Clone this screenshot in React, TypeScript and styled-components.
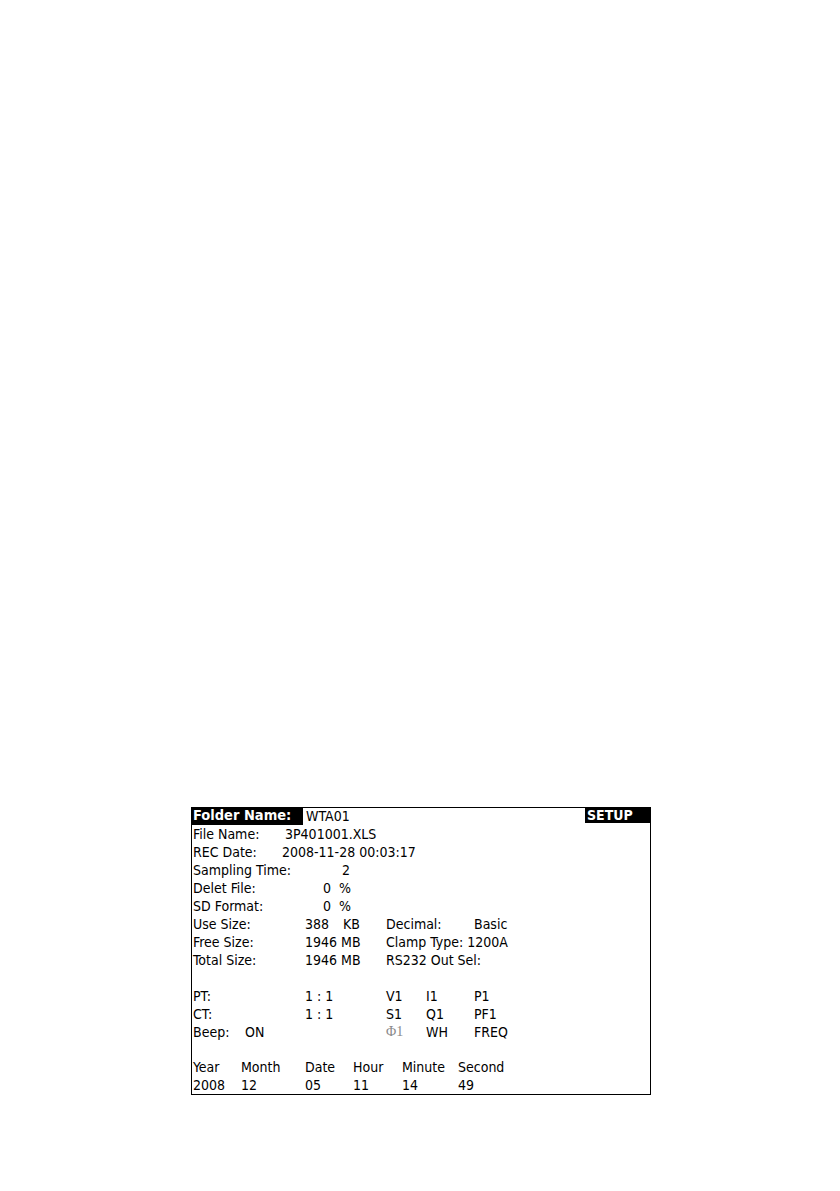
import React from "react";
import styled, { createGlobalStyle } from "styled-components";

const GlobalStyle = createGlobalStyle`
  html, body {
    margin: 0;
    padding: 0;
    background: #ffffff;
  }
`;

type Cell = { text: string; w?: number; phi?: boolean };

const ROWS: Cell[][] = [
  [{ text: "File Name:", w: 92 }, { text: "3P401001.XLS" }],
  [{ text: "REC Date:", w: 89 }, { text: "2008-11-28 00:03:17" }],
  [{ text: "Sampling Time:", w: 149 }, { text: "2" }],
  [{ text: "Delet File:", w: 130 }, { text: "0  %" }],
  [{ text: "SD Format:", w: 130 }, { text: "0  %" }],
  [
    { text: "Use Size:", w: 112 },
    { text: "388", w: 38 },
    { text: "KB", w: 43 },
    { text: "Decimal:", w: 88 },
    { text: "Basic" },
  ],
  [
    { text: "Free Size:", w: 112 },
    { text: "1946 MB", w: 81 },
    { text: "Clamp Type: 1200A" },
  ],
  [
    { text: "Total Size:", w: 112 },
    { text: "1946 MB", w: 81 },
    { text: "RS232 Out Sel:" },
  ],
  [],
  [
    { text: "PT:", w: 112 },
    { text: "1 : 1", w: 81 },
    { text: "V1", w: 40 },
    { text: "I1", w: 48 },
    { text: "P1" },
  ],
  [
    { text: "CT:", w: 112 },
    { text: "1 : 1", w: 81 },
    { text: "S1", w: 40 },
    { text: "Q1", w: 48 },
    { text: "PF1" },
  ],
  [
    { text: "Beep:", w: 52 },
    { text: "ON", w: 141 },
    { text: "Φ1", w: 40, phi: true },
    { text: "WH", w: 48 },
    { text: "FREQ" },
  ],
  [],
  [
    { text: "Year", w: 48 },
    { text: "Month", w: 64 },
    { text: "Date", w: 48 },
    { text: "Hour", w: 49 },
    { text: "Minute", w: 56 },
    { text: "Second" },
  ],
  [
    { text: "2008", w: 48 },
    { text: "12", w: 64 },
    { text: "05", w: 48 },
    { text: "11", w: 49 },
    { text: "14", w: 56 },
    { text: "49" },
  ],
];

export default function App() {
  return (
    <>
      <GlobalStyle />
      <Page>
        <Screen>
          <Header>
            <FolderTag>Folder Name:</FolderTag>
            <FolderValue>WTA01</FolderValue>
            <ModeTag>SETUP</ModeTag>
          </Header>
          {ROWS.map((row, i) => (
            <Row key={i}>
              {row.map((c, j) =>
                c.phi ? (
                  <PhiCell key={j} $w={c.w}>
                    {c.text}
                  </PhiCell>
                ) : (
                  <Field key={j} $w={c.w}>
                    {c.text}
                  </Field>
                )
              )}
            </Row>
          ))}
        </Screen>
      </Page>
    </>
  );
}

const Page = styled.div`
  width: 840px;
  height: 1191px;
  padding: 807px 0 0 191px;
  box-sizing: border-box;
  font-family: "DejaVu Sans Condensed", "DejaVu Sans", "Liberation Sans", sans-serif;
  font-stretch: condensed;
  color: #000;
`;

const Screen = styled.div`
  width: 460px;
  height: 288px;
  box-sizing: border-box;
  border: 1px solid #000;
  border-top: none;
  display: flex;
  flex-direction: column;
`;

const Header = styled.div`
  display: flex;
  align-items: stretch;
  height: 17px;
  margin-left: -1px;
  margin-right: -1px;
  border-top: 1px solid #000;
`;

const FolderTag = styled.div`
  background: #000;
  color: #fff;
  font-weight: bold;
  font-size: 14.5px;
  line-height: 17px;
  width: 112px;
  padding-left: 2px;
  margin-top: -1px;
  height: 18px;
  box-sizing: border-box;
`;

const FolderValue = styled.div`
  flex: 1;
  font-size: 14px;
  line-height: 17px;
  padding-left: 3px;
`;

const ModeTag = styled.div`
  background: #000;
  color: #fff;
  font-weight: bold;
  font-size: 14px;
  line-height: 16px;
  width: 66px;
  height: 16px;
  margin-top: -1px;
  padding-left: 2px;
  box-sizing: border-box;
`;

const Row = styled.div`
  display: flex;
  height: 18px;
  padding-left: 1px;
  font-size: 14px;
  line-height: 18px;
  white-space: pre;
`;

const Field = styled.div<{ $w?: number }>`
  width: ${(p) => (p.$w ? `${p.$w}px` : "auto")};
  flex: none;
`;

const PhiCell = styled(Field)`
  font-family: "Liberation Serif", serif;
  font-stretch: normal;
  color: #8a8a8a;
  font-size: 14px;
`;
